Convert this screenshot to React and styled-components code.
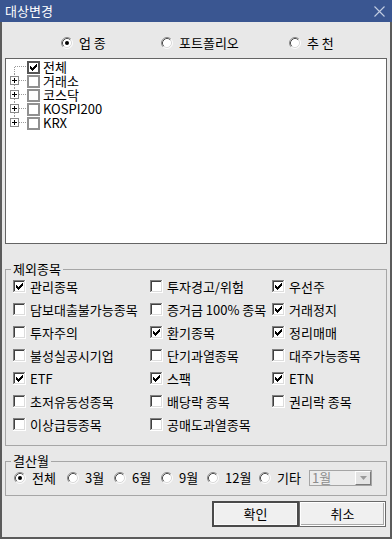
import React from 'react';
import styled, { createGlobalStyle } from 'styled-components';

const Global = createGlobalStyle`
  html, body { margin: 0; padding: 0; background: #e8e8e8; }
  body {
    font-family: "Noto Sans CJK KR", "Noto Sans", sans-serif;
    font-size: 13px;
    color: #000;
  }
  * { box-sizing: border-box; }
`;

const Window = styled.div`
  width: 392px;
  height: 539px;
  display: flex;
  flex-direction: column;
  background: #e8e8e8;
`;

const TitleBar = styled.div`
  height: 22px;
  flex: none;
  background: #3a5691;
  display: flex;
  align-items: center;
  justify-content: space-between;
  padding: 0 7px 0 5px;
  color: #fff;
  font-size: 13px;
  line-height: 16px;
`;

const Body = styled.div`
  flex: 1;
  display: flex;
  flex-direction: column;
  border: 2px solid #5b5b5b;
  border-top: none;
  padding: 0 3px;
`;

const RadioRow = styled.div`
  height: 36px;
  flex: none;
  display: flex;
  align-items: center;
  padding: 6px 0 0 56px;
`;

const RadioItem = styled.label`
  display: flex;
  align-items: center;
  gap: 6px;
  width: ${p => p.$w}px;
  flex: none;
  line-height: 14px;
  white-space: nowrap;
`;

const Tree = styled.div`
  height: 186px;
  flex: none;
  background: #fff;
  border: 1px solid #646464;
  padding: 1px 0 0 4px;
`;

const TreeRow = styled.div`
  height: 14px;
  display: flex;
  align-items: center;
`;

const TreeLabel = styled.div`
  margin-left: 3px;
  white-space: nowrap;
  height: 14px;
  line-height: 14px;
`;

const Group = styled.fieldset`
  margin: ${p => p.$mt}px 0 0;
  padding: 0 0 ${p => p.$pb}px;
  border: 1px solid #a6a6a6;
  min-width: 0;
  flex: none;
`;

const Legend = styled.legend`
  margin-left: 5px;
  padding: 0 2px;
  line-height: 14px;
  font-size: 13px;
`;

const CheckGrid = styled.div`
  display: grid;
  grid-template-columns: 137px 122px 1fr;
  grid-auto-rows: 23px;
  padding-left: 7px;
  margin-top: -1px;
`;

const CheckItem = styled.label`
  display: flex;
  align-items: center;
  gap: 4px;
  white-space: nowrap;
  line-height: 14px;
`;

const MonthRow = styled.div`
  height: 20px;
  display: flex;
  align-items: center;
  padding-left: 8px;
`;

const Select = styled.div`
  width: 63px;
  height: 16px;
  border: 1px solid #a5a5a5;
  background: #ececec;
  display: flex;
  align-items: center;
  justify-content: space-between;
  color: #8d8d8d;
  padding-left: 2px;
  line-height: 14px;
`;

const DropButton = styled.div`
  width: 16px;
  height: 14px;
  border-top: 1px solid #fff;
  border-left: 1px solid #fff;
  border-right: 1px solid #7a7a7a;
  border-bottom: 1px solid #7a7a7a;
  background: #e4e4e4;
  display: flex;
  align-items: center;
  justify-content: center;
`;

const ButtonRow = styled.div`
  display: flex;
  justify-content: flex-end;
  margin-top: 5px;
  padding-right: 1px;
`;

const Button = styled.button`
  width: 87px;
  height: 26px;
  font-family: inherit;
  font-size: 13px;
  color: #000;
  background: #f0f0f0;
  border: ${p => (p.$default ? '2px solid #4a4a4a' : '1px solid #6a6a6a')};
  box-shadow: ${p => (p.$default ? 'inset 0 0 0 1px #fafafa' : 'inset 0 0 0 1px #fff, inset -1px -1px 0 1px #a8a8a8')};
  padding: 0;
  line-height: 14px;
`;

const RadioIcon = ({ checked }) => (
  <svg width="12" height="12" viewBox="0 0 12 12" style={{ flex: 'none' }}>
    <circle cx="6" cy="6" r="5" fill="#fff" />
    <path d="M2.11 9.89 A5.5 5.5 0 0 1 9.89 2.11" stroke="#8a8a8a" fill="none" />
    <path d="M9.89 2.11 A5.5 5.5 0 0 1 2.11 9.89" stroke="#fdfdfd" fill="none" />
    <path d="M2.82 9.18 A4.5 4.5 0 0 1 9.18 2.82" stroke="#505050" fill="none" />
    <path d="M9.18 2.82 A4.5 4.5 0 0 1 2.82 9.18" stroke="#dadada" fill="none" />
    {checked && <circle cx="6" cy="6" r="2" fill="#000" />}
  </svg>
);

const checkCols = [
  [3, 5], [4, 6], [5, 7], [6, 6], [7, 5], [8, 4], [9, 3],
];

const CheckMark = () => (
  <>
    {checkCols.map(([x, y]) => (
      <rect key={x} x={x} y={y} width="1" height="3" fill="#000" />
    ))}
  </>
);

const CheckIcon = ({ checked }) => (
  <svg width="13" height="13" viewBox="0 0 13 13" shapeRendering="crispEdges" style={{ flex: 'none' }}>
    <rect x="0" y="0" width="13" height="13" fill="#fff" />
    <rect x="0" y="0" width="12" height="12" fill="#808080" />
    <rect x="1" y="1" width="11" height="11" fill="#dcdcdc" />
    <rect x="1" y="1" width="10" height="10" fill="#404040" />
    <rect x="2" y="2" width="9" height="9" fill="#fff" />
    {checked && <CheckMark />}
  </svg>
);

const TreeCheck = ({ checked }) => (
  <svg width="13" height="13" viewBox="0 0 13 13" shapeRendering="crispEdges" style={{ flex: 'none' }}>
    <rect x="1" y="1" width="11" height="11" fill="#fff" stroke={checked ? '#555' : '#909090'} strokeWidth="2" />
    {checked && <CheckMark />}
  </svg>
);

const Connector = ({ kind }) => (
  <svg width="17" height="14" viewBox="0 0 17 14" style={{ flex: 'none' }}>
    <g stroke="#9a9a9a" strokeDasharray="1 1" fill="none" shapeRendering="crispEdges">
      {kind === 'root' && <path d="M4.5 7 V14 M5 6.5 H17" />}
      {kind !== 'root' && <path d="M4.5 0 V2 M9 6.5 H17" />}
      {kind === 'mid' && <path d="M4.5 11 V14" />}
    </g>
    {kind !== 'root' && (
      <g shapeRendering="crispEdges">
        <rect x="0.5" y="2.5" width="8" height="8" fill="#fff" stroke="#8a8a8a" />
        <path d="M2 6.5 H7 M4.5 4 V9" stroke="#000" />
      </g>
    )}
  </svg>
);

const CloseIcon = () => (
  <svg width="11" height="11" viewBox="0 0 11 11">
    <path d="M0.5 0.5 L10.5 10.5 M10.5 0.5 L0.5 10.5" stroke="#c3cde2" strokeWidth="1.1" />
  </svg>
);

const Arrow = () => (
  <svg width="7" height="4" viewBox="0 0 7 4">
    <path d="M0 0 H7 L3.5 4 Z" fill="#9a9a9a" />
  </svg>
);

const treeItems = [
  { label: '전체', kind: 'root', checked: true },
  { label: '거래소', kind: 'mid' },
  { label: '코스닥', kind: 'mid' },
  { label: 'KOSPI200', kind: 'mid' },
  { label: 'KRX', kind: 'last' },
];

const excludes = [
  ['관리종목', true], ['투자경고/위험', false], ['우선주', true],
  ['담보대출불가능종목', false], ['증거금 100% 종목', false], ['거래정지', true],
  ['투자주의', false], ['환기종목', true], ['정리매매', true],
  ['불성실공시기업', false], ['단기과열종목', false], ['대주가능종목', false],
  ['ETF', true], ['스팩', true], ['ETN', true],
  ['초저유동성종목', false], ['배당락 종목', false], ['권리락 종목', false],
  ['이상급등종목', false], ['공매도과열종목', false],
];

const months = [
  ['전체', 53, true], ['3월', 47], ['6월', 47], ['9월', 46], ['12월', 52], ['기타', 50],
];

export default function App() {
  return (
    <>
      <Global />
      <Window>
        <TitleBar>
          <span>대상변경</span>
          <CloseIcon />
        </TitleBar>
        <Body>
          <RadioRow>
            <RadioItem $w={100}><RadioIcon checked /> 업 종</RadioItem>
            <RadioItem $w={128}><RadioIcon /> 포트폴리오</RadioItem>
            <RadioItem $w={60}><RadioIcon /> 추 천</RadioItem>
          </RadioRow>
          <Tree>
            {treeItems.map(t => (
              <TreeRow key={t.label}>
                <Connector kind={t.kind} />
                <TreeCheck checked={t.checked} />
                <TreeLabel>{t.label}</TreeLabel>
              </TreeRow>
            ))}
          </Tree>
          <Group $mt={18} $pb={9}>
            <Legend>제외종목</Legend>
            <CheckGrid>
              {excludes.map(([label, checked]) => (
                <CheckItem key={label}>
                  <CheckIcon checked={checked} />
                  {label}
                </CheckItem>
              ))}
            </CheckGrid>
          </Group>
          <Group $mt={8} $pb={7}>
            <Legend>결산월</Legend>
            <MonthRow>
              {months.map(([label, w, checked]) => (
                <RadioItem key={label} $w={w}>
                  <RadioIcon checked={checked} />
                  {label}
                </RadioItem>
              ))}
              <Select>
                <span>1월</span>
                <DropButton><Arrow /></DropButton>
              </Select>
            </MonthRow>
          </Group>
          <ButtonRow>
            <Button $default>확인</Button>
            <Button>취소</Button>
          </ButtonRow>
        </Body>
      </Window>
    </>
  );
}
